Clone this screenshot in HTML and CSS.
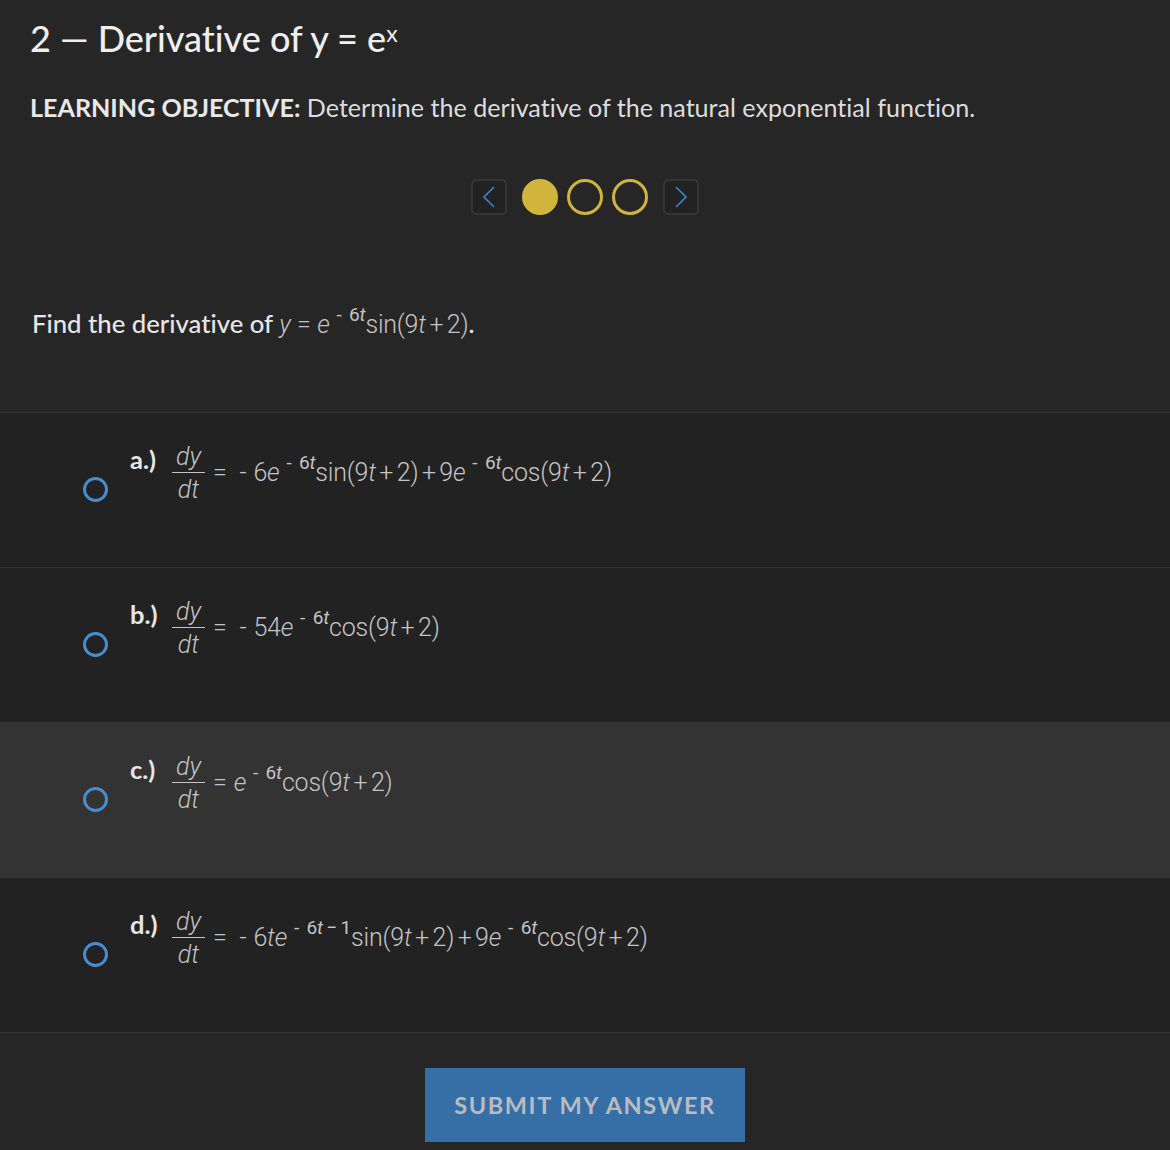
FILE: index.html
```html
<!DOCTYPE html>
<html lang="en">
<head>
<meta charset="utf-8">
<title>Derivative of y = e^x</title>
<link rel="stylesheet" href="styles.css">
</head>
<body>
<main class="page">
  <header class="intro">
    <h1 class="title">2 — Derivative of y = e<sup class="title-sup">x</sup></h1>
    <p class="objective"><strong class="objective-label">LEARNING OBJECTIVE:</strong> Determine the derivative of the natural exponential function.</p>
  </header>
  <nav class="pager">
    <button class="pager-btn"><svg width="14" height="24" viewBox="0 0 14 24"><path d="M12 2 2 12l10 10" fill="none" stroke="#4080c0" stroke-width="1.7"/></svg></button>
    <span class="dots">
      <span class="dot dot-on"></span>
      <span class="dot"></span>
      <span class="dot"></span>
    </span>
    <button class="pager-btn"><svg width="14" height="24" viewBox="0 0 14 24"><path d="M2 2l10 10L2 22" fill="none" stroke="#4080c0" stroke-width="1.7"/></svg></button>
  </nav>
  <p class="question">Find the derivative of <span class="math"><i>y</i><span class="op op-wide">=</span><i>e</i><sup class="exp">- 6<i>t</i></sup>sin(9<i>t</i><span class="op">+</span>2)</span>.</p>
  <ul class="options">
    <li class="option">
      <span class="radio"></span>
      <span class="letter">a.)</span>
      <span class="frac"><span class="num">dy</span><span class="den">dt</span></span>
      <span class="math expr"><span class="op eq">=</span> - 6<i>e</i><sup class="exp">- 6<i>t</i></sup>sin(9<i>t</i><span class="op">+</span>2)<span class="op">+</span>9<i>e</i><sup class="exp">- 6<i>t</i></sup>cos(9<i>t</i><span class="op">+</span>2)</span>
    </li>
    <li class="option">
      <span class="radio"></span>
      <span class="letter">b.)</span>
      <span class="frac"><span class="num">dy</span><span class="den">dt</span></span>
      <span class="math expr"><span class="op eq">=</span> - 54<i>e</i><sup class="exp">- 6<i>t</i></sup>cos(9<i>t</i><span class="op">+</span>2)</span>
    </li>
    <li class="option option-hover">
      <span class="radio"></span>
      <span class="letter">c.)</span>
      <span class="frac"><span class="num">dy</span><span class="den">dt</span></span>
      <span class="math expr"><span class="op eq eq-tight">=</span><i>e</i><sup class="exp">- 6<i>t</i></sup>cos(9<i>t</i><span class="op">+</span>2)</span>
    </li>
    <li class="option">
      <span class="radio"></span>
      <span class="letter">d.)</span>
      <span class="frac"><span class="num">dy</span><span class="den">dt</span></span>
      <span class="math expr"><span class="op eq">=</span> - 6<i>te</i><sup class="exp">- 6<i>t</i><span class="op">−</span>1</sup>sin(9<i>t</i><span class="op">+</span>2)<span class="op">+</span>9<i>e</i><sup class="exp">- 6<i>t</i></sup>cos(9<i>t</i><span class="op">+</span>2)</span>
    </li>
  </ul>
  <div class="actions"><button class="submit">SUBMIT MY ANSWER</button></div>
</main>
</body>
</html>
```
FILE: styles.css
```css
* { box-sizing: border-box; }
html, body { margin: 0; height: 100%; }
body {
  background: #262626;
  color: #e6e6e6;
  font-family: Lato, "Open Sans", sans-serif;
  font-variant-ligatures: none;
}
.page { height: 1150px; overflow: hidden; }
.intro { padding: 15px 30px 0; }
.title {
  margin: 0;
  font-size: 36px;
  line-height: 46px;
  font-weight: 500;
  color: #eeeeee;
}
.title-sup { font-size: 23px; font-weight: 400; line-height: 0; vertical-align: 10px; }
.objective {
  margin: 31px 0 0;
  font-size: 25.1px;
  line-height: 30px;
  font-weight: 400;
  color: #dcdcdc;
}
.objective-label { font-weight: 700; color: #e8e8e8; }
.pager {
  display: flex;
  justify-content: center;
  align-items: center;
  gap: 15px;
  margin-top: 57px;
  height: 36px;
}
.pager-btn {
  width: 36px;
  height: 36px;
  padding: 0;
  display: flex;
  align-items: center;
  justify-content: center;
  background: #222222;
  border: 2px solid #353535;
  border-radius: 5px;
}
.dots { display: flex; gap: 9px; }
.dot {
  width: 36px;
  height: 36px;
  border-radius: 50%;
  border: 3px solid #d0b43c;
}
.dot-on { background: #d0b43c; }
.question {
  margin: 88px 0 0 32px;
  height: 40px;
  font-size: 25.7px;
  line-height: 40px;
  font-weight: 500;
  color: #e6e6e6;
}
.math {
  font-family: Roboto, "Liberation Sans", sans-serif;
  font-weight: 300;
  color: #c4c4c4;
  font-size: 25px;
  letter-spacing: -0.2px;
}
.math i { font-style: italic; }
.op { padding: 0 3.5px; }
.op-wide { padding: 0 6.5px; }
.exp {
  font-size: 19px;
  font-weight: 400;
  line-height: 0;
  vertical-align: 12px;
  margin-left: 7px;
  word-spacing: 3px;
}
.options {
  list-style: none;
  margin: 69px 0 0;
  padding: 0;
  border-top: 1px solid #333333;
}
.option {
  height: 155px;
  padding: 0 0 0 83px;
  background: #222222;
  border-bottom: 1px solid #333333;
  display: flex;
  align-items: flex-start;
}
.option-hover { background: #333333; }
.radio {
  width: 25px;
  height: 25px;
  margin-top: 64px;
  margin-right: 22px;
  border: 3px solid #4a8cd0;
  border-radius: 50%;
  flex: none;
}
.letter {
  margin-top: 32px;
  width: 42px;
  font-size: 25.5px;
  line-height: 28px;
  font-weight: 700;
  color: #e6e6e6;
  flex: none;
}
.frac {
  display: flex;
  flex-direction: column;
  align-items: center;
  width: 33px;
  margin-top: 30px;
  font-family: Roboto, "Liberation Sans", sans-serif;
  font-style: italic;
  font-weight: 300;
  font-size: 25px;
  color: #c4c4c4;
  flex: none;
}
.num { height: 30px; line-height: 28px; width: 100%; text-align: center; border-bottom: 1px solid #c4c4c4; }
.den { height: 29px; line-height: 34px; }
.expr { margin-top: 44px; margin-left: 5px; line-height: 32px; white-space: nowrap; word-spacing: 1px; }
.eq { padding-left: 3px; padding-right: 6px; }
.eq-tight { padding-right: 7px; }
.actions { padding-top: 35px; display: flex; justify-content: center; }
.submit {
  width: 320px;
  height: 74px;
  border: 0;
  background: #366fa6;
  color: #b8bcc0;
  font-family: Lato, sans-serif;
  font-size: 23.5px;
  font-weight: 700;
  letter-spacing: 1.6px;
}
```
